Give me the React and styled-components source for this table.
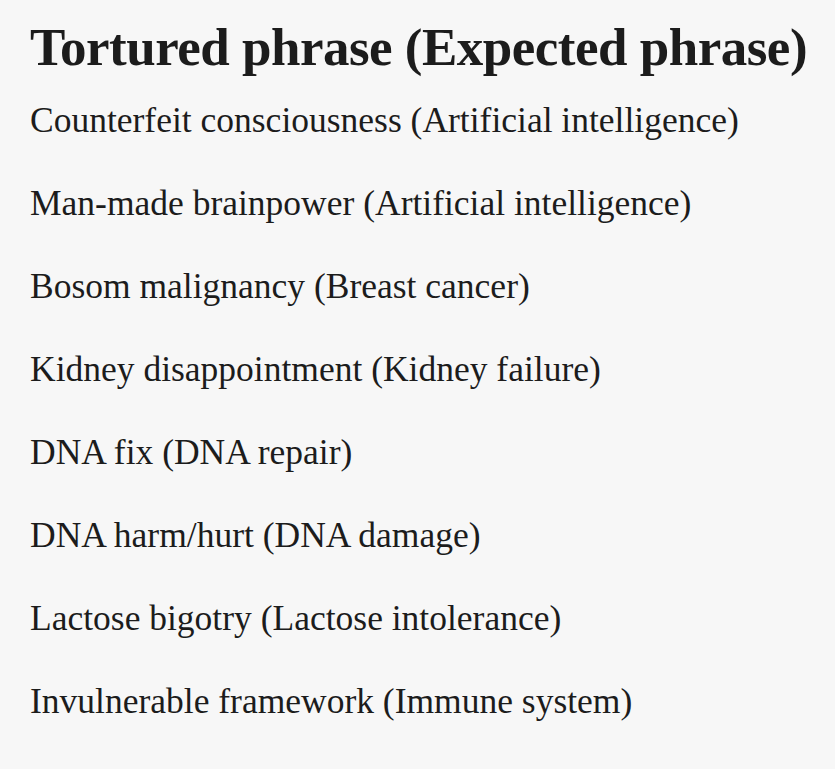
import React from "react";
import styled, { createGlobalStyle } from "styled-components";

const GlobalStyle = createGlobalStyle`
  html, body {
    margin: 0;
    padding: 0;
    background: #f7f7f7;
  }
`;

const PHRASES = [
  "Counterfeit consciousness (Artificial intelligence)",
  "Man-made brainpower (Artificial intelligence)",
  "Bosom malignancy (Breast cancer)",
  "Kidney disappointment (Kidney failure)",
  "DNA fix (DNA repair)",
  "DNA harm/hurt (DNA damage)",
  "Lactose bigotry (Lactose intolerance)",
  "Invulnerable framework (Immune system)",
];

export default function App() {
  return (
    <>
      <GlobalStyle />
      <Page>
        <Heading>Tortured phrase (Expected phrase)</Heading>
        <List>
          {PHRASES.map((p) => (
            <Item key={p}>{p}</Item>
          ))}
        </List>
      </Page>
    </>
  );
}

const Page = styled.div`
  width: 835px;
  height: 769px;
  box-sizing: border-box;
  padding: 16px 0 0 30px;
  background: #f7f7f7;
  color: #1c1c1c;
  font-family: "Liberation Serif", "Times New Roman", serif;
  overflow: hidden;
`;

const Heading = styled.h1`
  margin: 0;
  font-size: 53px;
  font-weight: 700;
  line-height: 62px;
  letter-spacing: -0.5px;
  white-space: nowrap;
`;

const List = styled.div`
  display: flex;
  flex-direction: column;
  margin-top: 1px;
`;

const Item = styled.p`
  margin: 0;
  font-size: 35.5px;
  line-height: 83px;
  white-space: nowrap;
`;
